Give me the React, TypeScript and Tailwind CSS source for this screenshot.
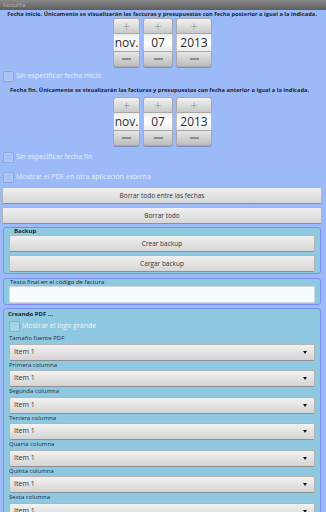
import React from 'react';

const FONT = { fontFamily: '"Open Sans", "Noto Sans", "DejaVu Sans", sans-serif' };

function Stepper({ value, width }: { value: string; width: string }) {
  return (
    <div className={`flex flex-col ${width}`}>
      <div className="h-[16px] rounded-t-[3px] border border-[#a8a8a8] bg-gradient-to-b from-[#f2f2f2] to-[#c9c9c9] flex items-center justify-center text-[#8c8c8c] text-[13px] leading-none font-light">
        +
      </div>
      <div className="h-[17px] bg-white border-x border-[#bdbdbd] bg-gradient-to-b from-[#ececec] via-white to-[#ececec] flex items-center justify-center text-[#2a2a2a] text-[12px] leading-none">
        {value}
      </div>
      <div className="h-[16px] rounded-b-[3px] border border-[#a8a8a8] bg-gradient-to-b from-[#e6e6e6] to-[#bdbdbd] shadow-[0_1px_0_#7c8fc0] flex items-center justify-center">
        <div className="w-[9px] h-[1.5px] bg-[#8c8c8c]" />
      </div>
    </div>
  );
}

function DatePicker() {
  return (
    <div className="flex justify-center gap-[3px] pl-[1px]">
      <Stepper value="nov." width="w-[27px]" />
      <Stepper value="07" width="w-[30px]" />
      <Stepper value="2013" width="w-[36px]" />
    </div>
  );
}

function Check({ label }: { label: string }) {
  return (
    <div className="flex items-center h-[15px] gap-[2px] pl-[1px]">
      <div className="w-[11px] h-[11px] rounded-[2px] border border-[#8da4dc] bg-[#aac3f6] shadow-[inset_0_0_1px_#ffffff]" />
      <span className="text-[7px] text-[#e6edfb]">{label}</span>
    </div>
  );
}

function GrayButton({ label, className = '' }: { label: string; className?: string }) {
  return (
    <div
      className={`h-[17px] rounded-[2px] border border-[#b4b4b4] border-b-[#8f8f8f] bg-gradient-to-b from-[#f0f0f0] to-[#d6d6d6] flex items-center justify-center text-[6.5px] text-[#333] ${className}`}
    >
      {label}
    </div>
  );
}

function Spinner({ label }: { label: string }) {
  return (
    <div className="flex flex-col">
      <div className="h-[9.5px] text-[6px] leading-[9.5px] text-[#1e2a3a] pl-[5px]">{label}</div>
      <div className="mx-[5px] h-[17px] rounded-[2px] border border-[#b4b4b4] border-b-[#8f8f8f] bg-gradient-to-b from-[#f2f2f2] to-[#d4d4d4] flex items-center justify-between pl-[4px] pr-[7px]">
        <span className="text-[7px] text-[#333]">Item 1</span>
        <div className="w-0 h-0 border-x-[2.5px] border-x-transparent border-t-[3px] border-t-[#111]" />
      </div>
    </div>
  );
}

export default function App() {
  return (
    <div className="w-[326px] h-[512px] overflow-hidden bg-[#9cbaf8] flex flex-col" style={FONT}>
      {/* title bar */}
      <div className="h-[10px] shrink-0 bg-gradient-to-b from-[#8a8a8a] to-[#5e5e5e] flex items-center pl-[3px]">
        <span className="text-[5.5px] text-[#b8b8b8] leading-[10px]">FacturYa</span>
      </div>

      <div className="flex flex-col pr-[4px] pl-[2px]">
        <div className="h-[8px] text-[5.7px] font-bold text-[#1a1f2e] text-center leading-[8px] whitespace-nowrap">
          Fecha inicio. Únicamente se visualizarán las facturas y presupuestos con fecha posterior o igual a la indicada.
        </div>
        <DatePicker />
        <div className="mt-[2px]">
          <Check label="Sin especificar fecha inicio" />
        </div>
        <div className="h-[8px] mt-[2px] text-[5.7px] font-bold text-[#1a1f2e] leading-[8px] whitespace-nowrap pl-[8px]">
          Fecha fin. Únicamente se visualizarán las facturas y presupuestos con fecha anterior o igual a la indicada.
        </div>
        <div className="mt-[3px]">
          <DatePicker />
        </div>
        <div className="mt-[4px] flex flex-col gap-[5px]">
          <Check label="Sin especificar fecha fin" />
          <Check label="Mostrar el PDF en otra aplicación externa" />
        </div>
        <div className="mt-[2px] flex flex-col gap-[3px]">
          <GrayButton label="Borrar todo entre las fechas" />
          <GrayButton label="Borrar todo" />
        </div>

        {/* Backup */}
        <div className="mt-[3px] mx-[1px] rounded-[3px] border-[1.5px] border-[#7b8ef6] bg-[#8fc9e1] px-[5px] pb-[1px]">
          <div className="h-[7px] text-[6px] font-bold text-[#1a1f2e] leading-[7px] pl-[5px]">Backup</div>
          <div className="flex flex-col gap-[3px]">
            <GrayButton label="Crear backup" />
            <GrayButton label="Cargar backup" />
          </div>
        </div>

        {/* Texto final */}
        <div className="mt-[4px] mx-[1px] rounded-[3px] border-[1.5px] border-[#7b8ef6] bg-[#8fc9e1] px-[5px] pb-[1px]">
          <div className="h-[7px] text-[6px] text-[#1a1f2e] leading-[7px] pl-[1px]">Texto final en el código de factura</div>
          <div className="h-[17px] border border-[#d0d8e0] bg-[#f7fbfd] rounded-[1px]" />
        </div>

        {/* Creando PDF */}
        <div className="mt-[3px] mx-[1px] rounded-[3px] border-[1.5px] border-[#7b8ef6] bg-[#8fc9e1] h-[220px] overflow-hidden">
          <div className="h-[9px] text-[6px] font-bold text-[#1a1f2e] leading-[9px] pl-[4px] mt-[1px]">Creando PDF ...</div>
          <div className="pl-[5px] mt-[1px]">
            <div className="flex items-center h-[13px] gap-[2px]">
              <div className="w-[11px] h-[11px] rounded-[2px] border border-[#7fb0c8] bg-[#a6d4e8]" />
              <span className="text-[7px] text-[#eef5fa]">Mostrar el logo grande</span>
            </div>
          </div>
          <div className="flex flex-col mt-[1px]">
            <Spinner label="Tamaño fuente PDF" />
            <Spinner label="Primera columna" />
            <Spinner label="Segunda columna" />
            <Spinner label="Tercera columna" />
            <Spinner label="Quarta columna" />
            <Spinner label="Quinta columna" />
            <Spinner label="Sexta columna" />
          </div>
        </div>
      </div>
    </div>
  );
}
